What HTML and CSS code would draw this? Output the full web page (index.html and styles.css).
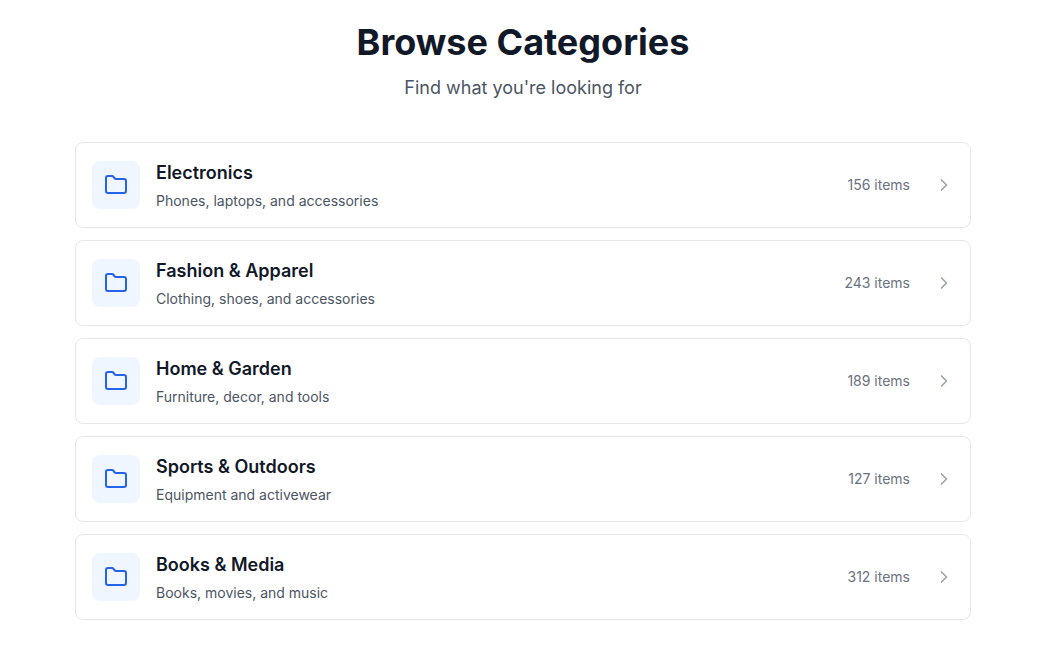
FILE: index.html
```html
<!DOCTYPE html>
<html lang="en">
<head>
<meta charset="utf-8">
<title>Browse Categories</title>
<link rel="stylesheet" href="styles.css">
</head>
<body>
<svg class="sprite" aria-hidden="true">
  <symbol id="folder" viewBox="0 0 24 24"><path d="M20 20a2 2 0 0 0 2-2V8a2 2 0 0 0-2-2h-7.9a2 2 0 0 1-1.69-.9L9.6 3.9A2 2 0 0 0 7.93 3H4a2 2 0 0 0-2 2v13a2 2 0 0 0 2 2Z"/></symbol>
  <symbol id="chevron" viewBox="0 0 24 24"><path d="m9 18 6-6-6-6"/></symbol>
</svg>
<main class="categories">
  <header class="header">
    <h1 class="title">Browse Categories</h1>
    <p class="subtitle">Find what you're looking for</p>
  </header>
  <div class="list">
    <a class="card"><span class="icon"><svg class="folder"><use href="#folder"/></svg></span><div class="info"><h2 class="name">Electronics</h2><p class="desc">Phones, laptops, and accessories</p></div><span class="count">156 items</span><svg class="chevron"><use href="#chevron"/></svg></a>
    <a class="card"><span class="icon"><svg class="folder"><use href="#folder"/></svg></span><div class="info"><h2 class="name">Fashion &amp; Apparel</h2><p class="desc">Clothing, shoes, and accessories</p></div><span class="count">243 items</span><svg class="chevron"><use href="#chevron"/></svg></a>
    <a class="card"><span class="icon"><svg class="folder"><use href="#folder"/></svg></span><div class="info"><h2 class="name">Home &amp; Garden</h2><p class="desc">Furniture, decor, and tools</p></div><span class="count">189 items</span><svg class="chevron"><use href="#chevron"/></svg></a>
    <a class="card"><span class="icon"><svg class="folder"><use href="#folder"/></svg></span><div class="info"><h2 class="name">Sports &amp; Outdoors</h2><p class="desc">Equipment and activewear</p></div><span class="count">127 items</span><svg class="chevron"><use href="#chevron"/></svg></a>
    <a class="card"><span class="icon"><svg class="folder"><use href="#folder"/></svg></span><div class="info"><h2 class="name">Books &amp; Media</h2><p class="desc">Books, movies, and music</p></div><span class="count">312 items</span><svg class="chevron"><use href="#chevron"/></svg></a>
  </div>
</main>
</body>
</html>
```

FILE: styles.css
```css
* { box-sizing: border-box; margin: 0; padding: 0; }
body { background: #fff; font-family: Inter, sans-serif; color: #111827; }
.sprite { display: none; }
.categories { width: 896px; margin-left: 75px; padding-top: 15px; }
.header { text-align: center; margin-bottom: 40px; }
.title { font-size: 36px; line-height: 54px; font-weight: 700; }
.subtitle { margin-top: 5px; font-size: 18px; line-height: 28px; color: #4b5563; }
.list { display: flex; flex-direction: column; gap: 12px; }
.card { display: flex; align-items: center; height: 86px; padding: 0 16px; border: 1px solid #e5e7eb; border-radius: 8px; background: #fff; }
.icon { display: flex; align-items: center; justify-content: center; width: 48px; height: 48px; border-radius: 8px; background: #eff6ff; color: #2563eb; }
.folder { width: 24px; height: 24px; }
.folder, .chevron { fill: none; stroke: currentColor; stroke-width: 2; stroke-linecap: round; stroke-linejoin: round; }
.info { flex: 1; margin-left: 16px; }
.name { font-size: 18px; line-height: 27px; font-weight: 600; }
.desc { margin-top: 4px; font-size: 14px; line-height: 21px; color: #4b5563; }
.count { font-size: 14px; line-height: 20px; color: #6b7280; }
.chevron { width: 20px; height: 20px; margin-left: 24px; color: #9ca3af; }
```
